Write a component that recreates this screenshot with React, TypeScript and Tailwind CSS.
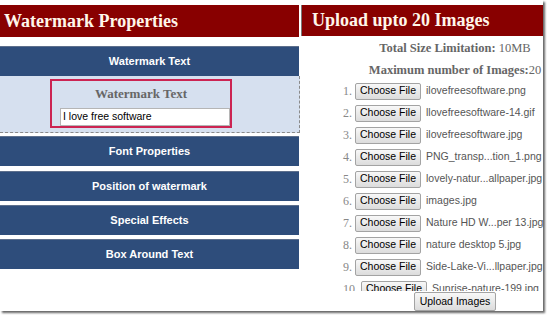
import React from "react";

const serif = { fontFamily: '"Liberation Serif", "Times New Roman", serif' };
const sans = { fontFamily: '"Liberation Sans", Arial, sans-serif' };

const files = [
  "ilovefreesoftware.png",
  "llovefreesoftware-14.gif",
  "ilovefreesoftware.jpg",
  "PNG_transp...tion_1.png",
  "lovely-natur...allpaper.jpg",
  "images.jpg",
  "Nature HD W...per 13.jpg",
  "nature desktop 5.jpg",
  "Side-Lake-Vi...llpaper.jpg",
  "Sunrise-nature-199.jpg",
];

function Bar({ label, className = "" }: { label: string; className?: string }) {
  return (
    <div
      className={`w-[299px] h-[30px] bg-[#2e4d7b] border-t border-[#5d6f8c] flex items-center justify-center text-white font-bold text-[11px] ${className}`}
      style={sans}
    >
      {label}
    </div>
  );
}

function ChooseButton() {
  return (
    <div
      className="h-[17px] px-[4px] flex items-center border border-[#a3a3a3] rounded-[2px] bg-gradient-to-b from-[#f8f8f8] to-[#dcdcdc] text-black text-[10.5px] whitespace-nowrap"
      style={sans}
    >
      Choose File
    </div>
  );
}

export default function App() {
  return (
    <div className="w-[547px] h-[315px] bg-white overflow-hidden">
      <div className="w-[543px] h-[311px] bg-white flex shadow-[2px_2px_2px_rgba(0,0,0,0.6)]">
        {/* Left panel */}
        <div className="w-[301px] flex flex-col pt-[5px]">
          <div
            className="w-[299px] h-[32px] bg-[#880000] text-[#fff6ea] font-bold text-[18px] flex items-center pl-[4px]"
            style={serif}
          >
            Watermark Properties
          </div>
          <Bar label="Watermark Text" className="mt-[9px] h-[29px]" />
          <div className="w-[300px] h-[57px] bg-[#d6e0ef] border-r border-b border-dashed border-[#8a8a8a]">
            <div className="ml-[50px] mt-[3px] w-[182px] h-[49px] border-2 border-[#cc2452] flex flex-col items-center">
              <div className="pt-[5px] leading-[16px] text-[13px] font-bold text-[#666]" style={serif}>
                Watermark Text
              </div>
              <div
                className="mt-[6px] ml-[8px] self-start w-[170px] h-[18px] bg-white border border-[#b5b5b5] flex items-center pl-[2px] text-[10.5px] text-black"
                style={sans}
              >
                I love free software
              </div>
            </div>
          </div>
          <Bar label="Font Properties" className="mt-[3px]" />
          <Bar label="Position of watermark" className="mt-[5px]" />
          <Bar label="Special Effects" className="mt-[4px]" />
          <Bar label="Box Around Text" className="mt-[4px]" />
        </div>

        {/* Right panel */}
        <div className="w-[242px] flex flex-col pt-[5px] overflow-hidden">
          <div
            className="w-[242px] h-[32px] bg-[#880000] border-l border-[#7a7a7a] text-[#fff6ea] font-bold text-[18px] flex items-center pl-[10px] whitespace-nowrap"
            style={serif}
          >
            Upload upto 20 Images
          </div>
          <div className="w-[308px] flex flex-col">
            <div className="mt-[3px] h-[18px] leading-[18px] text-center text-[12.5px] text-[#666] whitespace-nowrap" style={serif}>
              <span className="font-bold">Total Size Limitation:</span> 10MB
            </div>
            <div className="mt-[4px] h-[18px] leading-[18px] text-center text-[12.5px] text-[#666] whitespace-nowrap" style={serif}>
              <span className="font-bold">Maximum number of Images:</span>20
            </div>
            <div className="mt-[1px] h-[211px] overflow-hidden flex flex-col">
              {files.map((f, i) => (
                <div key={i} className="h-[22px] shrink-0 flex items-center pl-[42px] whitespace-nowrap">
                  <span className="mr-[3px] text-[12px] text-[#888]" style={serif}>
                    {i + 1}.
                  </span>
                  <ChooseButton />
                  <span className="ml-[5px] text-[10.5px] text-[#555]" style={sans}>
                    {f}
                  </span>
                </div>
              ))}
            </div>
            <div className="flex justify-center mt-[1px]">
              <div
                className="h-[19px] px-[5px] flex items-center border border-[#a3a3a3] rounded-[2px] bg-gradient-to-b from-[#f8f8f8] to-[#dcdcdc] text-black text-[10.5px] whitespace-nowrap"
                style={sans}
              >
                Upload Images
              </div>
            </div>
          </div>
        </div>
      </div>
    </div>
  );
}
